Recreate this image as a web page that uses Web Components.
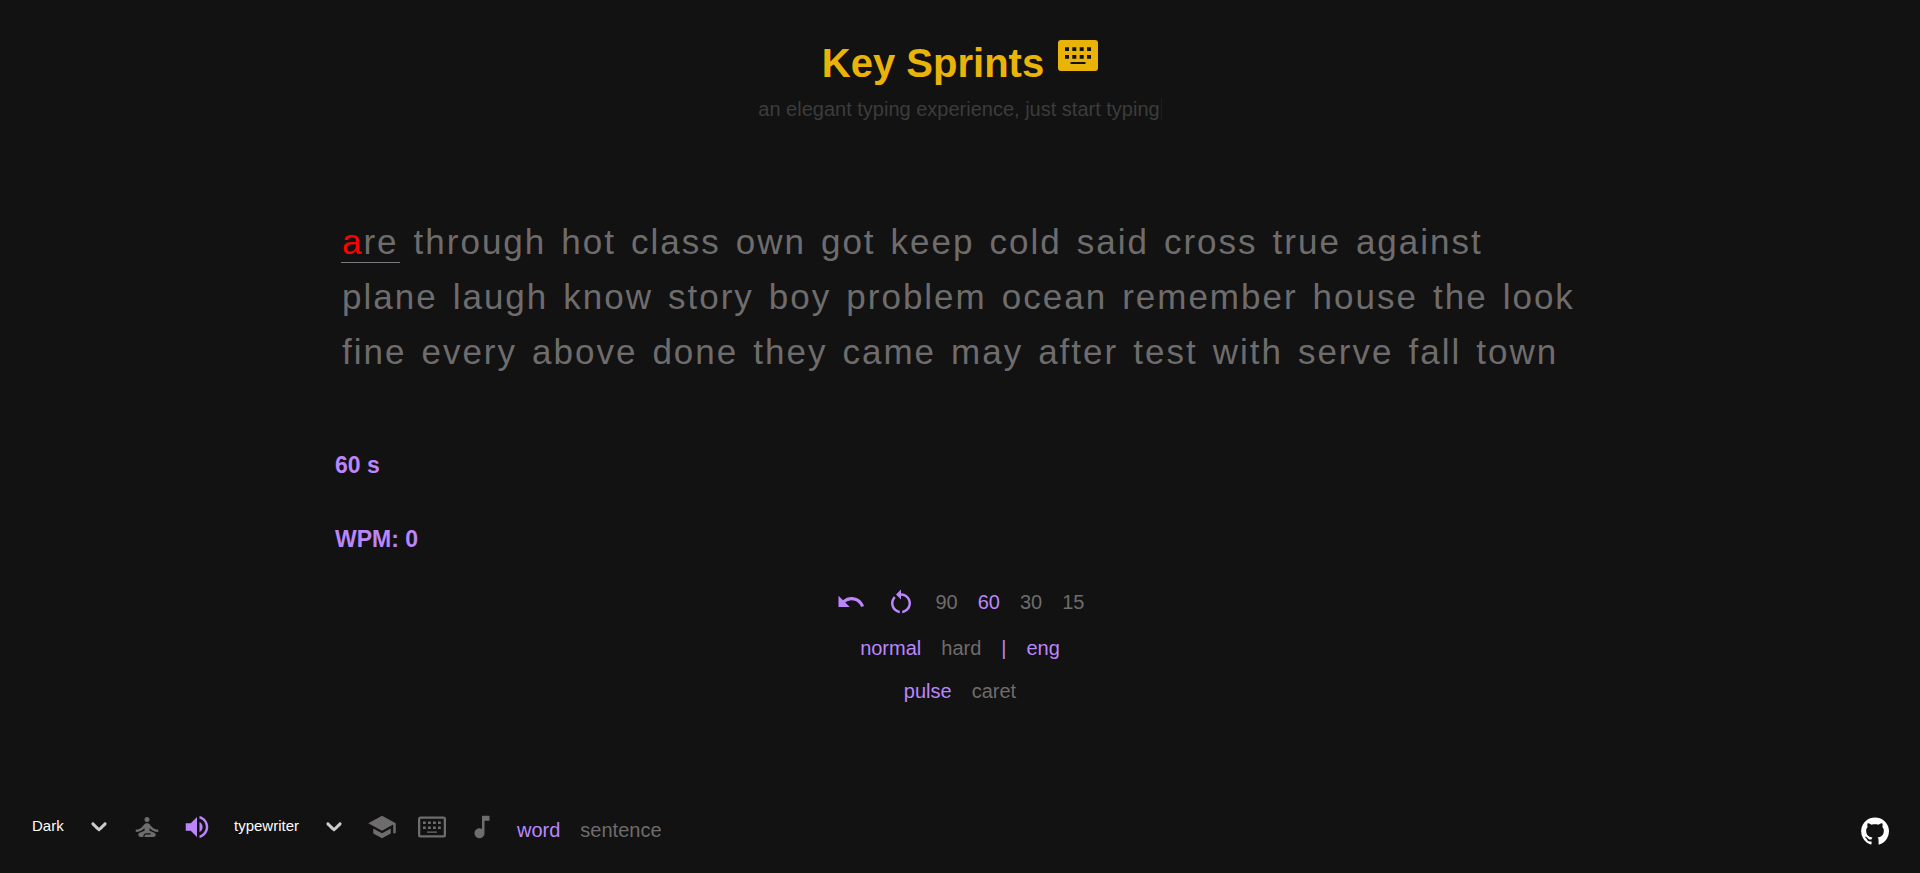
<!DOCTYPE html>
<html lang="en">
<head>
<meta charset="utf-8">
<title>Key Sprints</title>
<style>
html{height:100%}
body{margin:0;min-height:100%;background:#121212;color:#6e6c6c;font-family:"Liberation Sans",Arial,sans-serif;font-size:20px;display:flex}
</style>
</head>
<body>
<key-sprints></key-sprints>
<script>
const icons={
undo:['0 0 24 24','<path d="M12.5 8c-2.65 0-5.05.99-6.9 2.6L2 7v9h9l-3.62-3.62c1.39-1.16 3.16-1.88 5.12-1.88 3.54 0 6.55 2.31 7.6 5.5l2.37-.78C21.08 11.03 17.15 8 12.5 8z"/>'],
restart:['0 0 24 24','<path d="M12 5V2L8 6l4 4V7c3.31 0 6 2.69 6 6 0 2.97-2.17 5.43-5 5.91v2.02c3.95-.49 7-3.85 7-7.93 0-4.42-3.58-8-8-8zM6 13c0-1.65.67-3.15 1.76-4.24L6.34 7.34C4.9 8.79 4 10.79 4 13c0 4.08 3.05 7.44 7 7.93v-2.02c-2.83-.48-5-2.94-5-5.91z"/>'],
lotus:['0 0 24 24','<circle cx="12" cy="6" r="2"/><path d="M21 16v-2c-2.24 0-4.16-.96-5.6-2.68l-1.34-1.6C13.68 9.26 13.12 9 12.53 9h-1.05c-.6 0-1.15.26-1.53.72l-1.34 1.6C7.16 13.04 5.24 14 3 14v2c2.77 0 5.19-1.17 7-3.25V15l-3.88 1.55c-.67.27-1.12.93-1.12 1.66C5 19.2 5.8 20 6.79 20H9v-.5c0-1.38 1.12-2.5 2.5-2.5h3c.28 0 .5.22.5.5s-.22.5-.5.5h-3c-.83 0-1.5.67-1.5 1.5v.5h7.1c.85 0 1.65-.55 1.85-1.37.21-.89-.27-1.76-1.08-2.08L14 15v-2.25c1.81 2.08 4.23 3.25 7 3.25z"/>'],
volume:['0 0 24 24','<path d="M3 9v6h4l5 5V4L7 9H3zm13.500 3c0-1.770-1.020-3.290-2.500-4.030v8.050c1.480-.73 2.500-2.250 2.500-4.020zM14 3.230v2.060c2.890.86 5 3.540 5 6.710s-2.110 5.850-5 6.710v2.060c4.010-.91 7-4.490 7-8.770s-2.990-7.860-7-8.770z"/>'],
school:['0 0 24 24','<path d="M5 13.180v4L12 21l7-3.820v-4L12 17l-7-3.820zM12 3L1 9l11 6 9-4.910V17h2V9L12 3z"/>'],
note:['0 0 24 24','<path d="M12 3v10.550c-.59-.34-1.270-.55-2-.55-2.210 0-4 1.790-4 4s1.790 4 4 4 4-1.790 4-4V7h4V3h-6z"/>'],
keys:['0 0 40 31','<path fill-rule="evenodd" d="M3 0h34a3 3 0 0 1 3 3v25a3 3 0 0 1-3 3H3a3 3 0 0 1-3-3V3a3 3 0 0 1 3-3zM7 7.300v3.700h4V7.300zM14.300 7.300v3.700h4V7.300zM21.700 7.300v3.700h4V7.300zM29 7.300v3.700h4V7.300zM7 15v3.700h4V15zM14.300 15v3.700h4V15zM21.700 15v3.700h4V15zM29 15v3.700h4V15zM12.500 22v2h15v-2z"/>'],
keysOutline:['0 0 28 21','<path fill-rule="evenodd" d="M2.500 0h23a2.500 2.500 0 0 1 2.500 2.500v16a2.500 2.500 0 0 1-2.500 2.500h-23A2.500 2.500 0 0 1 0 18.500v-16A2.500 2.500 0 0 1 2.500 0zM2.300 2.300v16.400h23.400V2.300zM5 5h2.800v2.600H5zM10 5h2.800v2.600H10zM15 5h2.800v2.600H15zM20 5h2.800v2.600H20zM5 10h2.800v2.600H5zM10 10h2.800v2.600H10zM15 10h2.800v2.600H15zM20 10h2.800v2.600H20zM9 15h10v1.200H9z"/>'],
chevron:['0 0 20 20','<path d="M4.516 7.548c.436-.446 1.043-.481 1.576 0L10 11.295l3.908-3.747c.533-.481 1.141-.446 1.574 0 .436.445.408 1.197 0 1.615-.406.418-4.695 4.502-4.695 4.502a1.095 1.095 0 0 1-1.576 0S4.924 9.581 4.516 9.163s-.436-1.170 0-1.615z"/>'],
github:['0 0 24 24','<path d="M12 1.270a11 11 0 0 0-3.480 21.460c.55.09.73-.28.73-.55v-1.840c-3.030.64-3.670-1.460-3.670-1.460-.55-1.290-1.280-1.650-1.280-1.650-.92-.65.1-.65.1-.65 1.100 0 1.730 1.100 1.730 1.100.92 1.650 2.570 1.200 3.210.92a2 2 0 0 1 .64-1.470c-2.470-.27-5.040-1.190-5.040-5.500 0-1.100.46-2.100 1.200-2.840a3.760 3.760 0 0 1 0-2.930s.91-.28 3.110 1.100c1.800-.49 3.700-.49 5.500 0 2.100-1.380 3.020-1.100 3.020-1.100a3.760 3.760 0 0 1 .1 2.930c.74.74 1.190 1.740 1.190 2.840 0 4.320-2.580 5.230-5.040 5.500.45.37.82.92.82 2.020v3.030c0 .27.1.64.73.55A11 11 0 0 0 12 1.270z"/>']
};
const define=(name,template)=>customElements.define(name,class extends HTMLElement{
  connectedCallback(){
    if(this.shadowRoot)return;
    const root=this.attachShadow({mode:'open'});
    const t=document.createElement('template');
    t.innerHTML=typeof template==='function'?template(this):template;
    root.append(t.content.cloneNode(true));
  }
});
define('ks-icon',el=>{const [box,body]=icons[el.getAttribute('name')];return `
<style>:host{display:block;width:30px;height:30px}svg{display:block;width:100%;height:100%;fill:currentColor}</style>
<svg viewBox="${box}" aria-hidden="true">${body}</svg>`});
define('ks-button',el=>`
<style>
:host{display:block}
button{display:block;margin:0;padding:10px;border:0;background:none;color:#6e6c6c;font:inherit;line-height:23px;cursor:pointer}
:host([active]) button{color:#bb86fc}
</style>
<button type="button" aria-label="${el.getAttribute('label')||el.textContent.trim()}" aria-pressed="${el.hasAttribute('active')}"><slot></slot></button>`);
define('ks-select',el=>`
<style>
:host{display:grid;align-items:center;color:#fff;font-size:15px}
select,ks-icon{grid-area:1/1}
select{appearance:none;width:100%;height:38px;margin:0;padding:0 40px 0 10px;border:0;background:none;color:inherit;font:inherit}
ks-icon{justify-self:end;width:26px;height:26px;margin-right:10px;color:#ccc;pointer-events:none}
</style>
<select aria-label="${el.getAttribute('label')}"><option>${el.getAttribute('value')}</option></select><ks-icon name="chevron"></ks-icon>`);
define('ks-header',`
<style>
:host{display:flex;flex-direction:column;align-items:center}
h1{display:flex;gap:14px;margin:0;color:#eab308;font-size:40px;line-height:46px}
ks-icon{width:40px;height:31px}
p{margin:12px 0 0;padding-right:1px;border-right:1px solid #1c1c24;color:#3c3c3c;line-height:23px}
</style>
<h1>Key Sprints <ks-icon name="keys"></ks-icon></h1>
<p>an elegant typing experience, just start typing</p>`);
define('ks-word',`
<style>
:host{display:block;margin:6px 7px 8px 6px;padding:0 1px;border-bottom:1px solid transparent;line-height:40px}
:host([active]){border-color:#7c7880}
::slotted(span){color:#f00}
</style><slot></slot>`);
const words='through hot class own got keep cold said cross true against plane laugh know story boy problem ocean remember house the look fine every above done they came may after test with serve fall town'.split(' ');
define('ks-words',`
<style>
:host{display:flex;flex-wrap:wrap;font-size:35px;letter-spacing:2px}
</style>
<ks-word active><span>a</span>re</ks-word>${words.map(w=>`<ks-word>${w}</ks-word>`).join('')}`);
define('ks-stats',`
<style>
:host{display:block;color:#bb86fc}
h3{margin:0 0 48px;font-size:23px;line-height:26px}
h3:last-child{margin:0}
</style><h3>60 s</h3><h3>WPM: 0</h3>`);
define('ks-menu',`
<style>:host,div{display:flex;align-items:center}:host{flex-direction:column}</style>
<div><ks-button active label="undo"><ks-icon name="undo"></ks-icon></ks-button><ks-button active label="restart"><ks-icon name="restart"></ks-icon></ks-button><ks-button>90</ks-button><ks-button active>60</ks-button><ks-button>30</ks-button><ks-button>15</ks-button></div>
<div><ks-button active>normal</ks-button><ks-button>hard</ks-button><ks-button active>|</ks-button><ks-button active>eng</ks-button></div>
<div><ks-button active>pulse</ks-button><ks-button>caret</ks-button></div>`);
define('ks-footer',`
<style>
:host{display:flex;justify-content:space-between;align-items:center}
div{display:flex;align-items:center}
ks-select{margin-bottom:3px}
.theme{width:100px}.sound{width:133px;margin-left:2px}
.wide{width:28px;height:30px;margin:0 1px}
.label{margin-top:6px}
a{display:block;padding:10px;margin-top:8px;color:#fff}
</style>
<div>
<ks-select class="theme" label="Theme" value="Dark"></ks-select>
<ks-button label="zen mode"><ks-icon name="lotus"></ks-icon></ks-button>
<ks-button active label="sound"><ks-icon name="volume"></ks-icon></ks-button>
<ks-select class="sound" label="Sound type" value="typewriter"></ks-select>
<ks-button label="trainer"><ks-icon name="school"></ks-icon></ks-button>
<ks-button label="keyboard"><ks-icon class="wide" name="keysOutline"></ks-icon></ks-button>
<ks-button label="music"><ks-icon name="note"></ks-icon></ks-button>
<ks-button class="label" active>word</ks-button>
<ks-button class="label">sentence</ks-button>
</div>
<a href="#" aria-label="GitHub"><ks-icon name="github"></ks-icon></a>`);
define('key-sprints',`
<style>
:host{flex:1;display:flex;flex-direction:column;box-sizing:border-box;padding:40px 20px 17px}
main{width:100%;max-width:1250px;margin:95px auto 0}
ks-stats{margin-top:71px}
ks-menu{margin-top:25px}
ks-footer{margin-top:auto;padding-left:2px}
</style>
<ks-header></ks-header>
<main><ks-words></ks-words><ks-stats></ks-stats><ks-menu></ks-menu></main>
<ks-footer></ks-footer>`);
</script>
</body>
</html>
